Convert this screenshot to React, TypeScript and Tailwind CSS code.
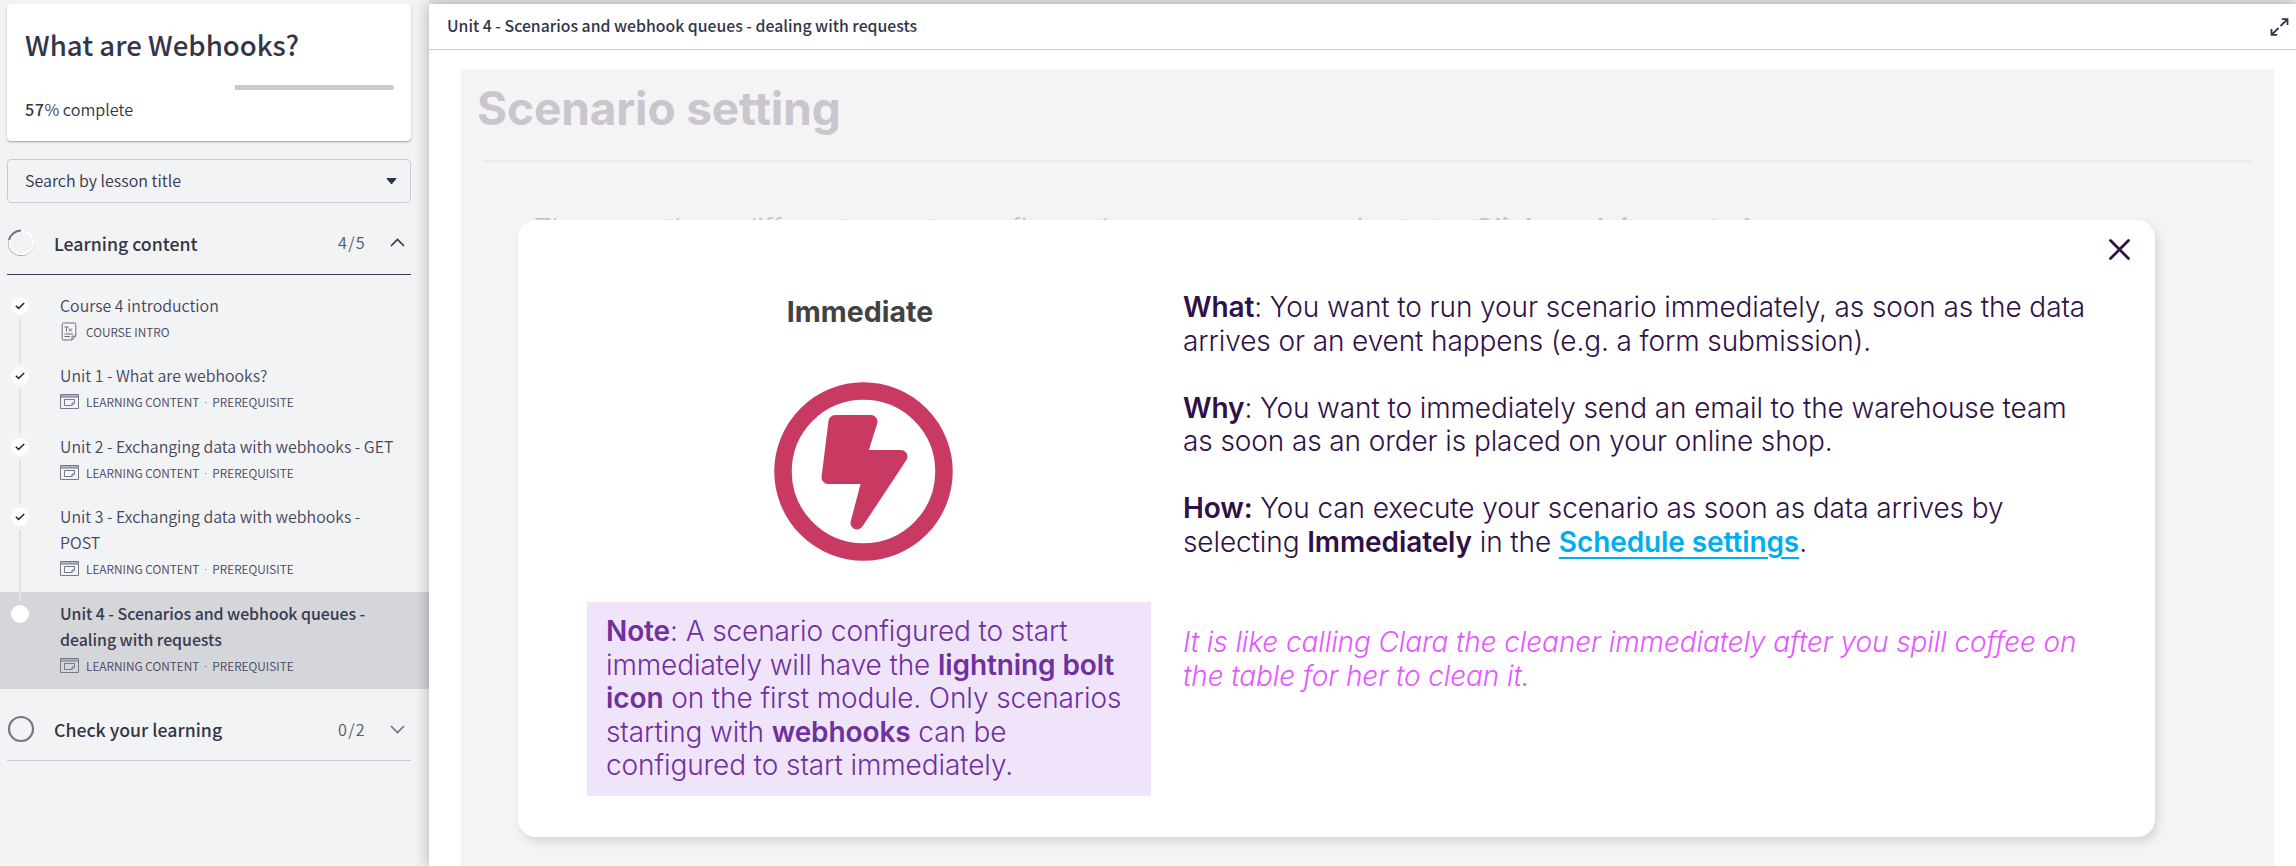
import React from "react";

const sans = "font-['Noto_Sans_CJK_SC',sans-serif]";

function Check({ done }: { done: boolean }) {
  return (
    <span className="flex size-[18px] shrink-0 items-center justify-center rounded-full bg-white">
      {done && (
        <svg width="10" height="8" viewBox="0 0 10 8" fill="none" stroke="#26262e" strokeWidth="1.5">
          <path d="M0.8 3.7 L3.6 6.4 L9.2 1" />
        </svg>
      )}
    </span>
  );
}

function PageIcon() {
  return (
    <svg className="ml-[1px]" width="16" height="19" viewBox="0 0 16 19" fill="none" stroke="#6b6c80" strokeWidth="1">
      <path d="M2.5 1 H13.5 Q14.8 1 14.8 2.4 V14 L11 18 H2.5 Q1.2 18 1.2 16.6 V2.4 Q1.2 1 2.5 1 Z M11 18 V14.2 H14.8" />
      <path d="M3.5 5 H7.5 M5.5 5 V9.5 M8 6.5 L10.8 9.5 M10.8 6.5 L8 9.5 M3.5 12 H12 M3.5 14.5 H9" />
    </svg>
  );
}

function SlideIcon() {
  return (
    <svg width="19" height="15" viewBox="0 0 19 15" fill="none" stroke="#77788b" strokeWidth="1">
      <path d="M1 2 H18" stroke="#b4b5c2" strokeWidth="2" />
      <path d="M0.5 0.5 H18.5 V14.5 H0.5 Z M0.5 3 H18.5" />
      <path d="M4.5 5.5 H14.5 V9 L12 11.5 H4.5 Z M12 11.5 V9 H14.5" />
    </svg>
  );
}

type Lesson = { lines: string[]; meta: string[]; icon: "page" | "slide"; active?: boolean; h: string };

const prerequisite = ["LEARNING CONTENT", "PREREQUISITE"];

const lessons: Lesson[] = [
  { lines: ["Course 4 introduction"], meta: ["COURSE INTRO"], icon: "page", h: "h-[70px]" },
  { lines: ["Unit 1 - What are webhooks?"], meta: prerequisite, icon: "slide", h: "h-[71px]" },
  { lines: ["Unit 2 - Exchanging data with webhooks - GET"], meta: prerequisite, icon: "slide", h: "h-[70px]" },
  { lines: ["Unit 3 - Exchanging data with webhooks -", "POST"], meta: prerequisite, icon: "slide", h: "h-[97px]" },
  { lines: ["Unit 4 - Scenarios and webhook queues -", "dealing with requests"], meta: prerequisite, icon: "slide", active: true, h: "h-[97px]" },
];

function LessonRow({ l }: { l: Lesson }) {
  return (
    <li className={`flex ${l.h} ${l.active ? "bg-[#d5d6da]" : ""}`}>
      <div className="flex w-[60px] shrink-0 flex-col pt-[13px] pl-[11px]">
        <Check done={!l.active} />
        {!l.active && <span className="mt-[4px] -mb-[9px] ml-[8px] w-[2px] grow bg-[#dfe0e3]" />}
      </div>
      <div className="pt-[9px]">
        {l.lines.map((t) => (
          <p
            key={t}
            className={`h-[26px] text-[15.9px] leading-[26px] whitespace-nowrap ${l.active ? "font-medium tracking-[-0.04px] text-[#383a52]" : "font-[350] text-[#45465c]"}`}
          >
            {t}
          </p>
        ))}
        <div className="flex h-[25px] items-center">
          <span className="w-[26px]">{l.icon === "page" ? <PageIcon /> : <SlideIcon />}</span>
          <span className="flex text-[11.9px] leading-[20px] font-[350] whitespace-nowrap text-[#45465c]">
            {l.meta[0]}
            {l.meta[1] && <span className="w-[13px] text-center font-['Noto_Sans',sans-serif]">·</span>}
            {l.meta[1]}
          </span>
        </div>
      </div>
    </li>
  );
}

function Sidebar() {
  return (
    <aside className={`flex w-[429px] shrink-0 flex-col bg-[#f2f3f5] pt-[4px] text-[#333549] ${sans}`}>
      <section className="ml-[7px] h-[137px] w-[404px] rounded-[4px] bg-white px-[18px] pt-[18px] shadow-[0_1px_2px_rgba(0,0,0,0.35)]">
        <h1 className="h-[44px] text-[27.6px] leading-[44px] font-medium whitespace-nowrap">What are Webhooks?</h1>
        <div className="mt-[19px] flex h-[5px] w-[369px] justify-end">
          <div className="w-[159px] rounded-r-[3px] bg-[#c8cad6]" />
        </div>
        <p className="mt-[6px] text-[16.2px] leading-[26px] font-[350]">
          <span className="font-medium tracking-[0.5px]">57</span>% complete
        </p>
      </section>
      <div className="mt-[18px] ml-[7px] flex h-[44px] w-[404px] items-center justify-between rounded-[4px] border border-[#c9cbd6] pr-[13px] pl-[17px]">
        <span className="pb-[3px] text-[16px] leading-[26px] font-[350]">Search by lesson title</span>
        <svg width="11" height="7" viewBox="0 0 11 7">
          <path d="M1 0.5 H10 L5.5 6 Z" fill="#2d3047" stroke="#2d3047" strokeLinejoin="round" />
        </svg>
      </div>
      <div className="ml-[7px] flex h-[72px] w-[404px] items-center border-b border-[#383a52] pt-[8px]">
        <svg width="28" height="28" viewBox="0 0 28 28" fill="none">
          <circle cx="14" cy="14" r="12.6" stroke="#8f90a0" strokeWidth="1" />
          <circle cx="14.3" cy="13.5" r="11.8" stroke="#ffffff" strokeWidth="2" />
          <path d="M2 11 A12.5 12.5 0 0 1 14 1.5" stroke="#6d6f84" strokeWidth="2" />
        </svg>
        <span className="ml-[19px] grow text-[17.7px] leading-[28px] font-medium">Learning content</span>
        <span className="text-[16.2px] font-[350] tracking-[1.3px] text-[#53556a]">4/5</span>
        <svg className="mr-[6px] ml-[24px]" width="15" height="9" viewBox="0 0 15 9" fill="none" stroke="#333549" strokeWidth="1.6">
          <path d="M1 8 L7.5 1.5 L14 8" />
        </svg>
      </div>
      <ul className="pt-[9px]">
        {lessons.map((l) => (
          <LessonRow key={l.lines[0]} l={l} />
        ))}
      </ul>
      <div className="ml-[7px] flex h-[72px] w-[404px] items-center border-b border-[#c8cad6] pt-[9px]">
        <svg width="28" height="28" viewBox="0 0 28 28" fill="none">
          <circle cx="14" cy="14" r="12" stroke="#74768a" strokeWidth="2.2" />
        </svg>
        <span className="ml-[19px] grow text-[17.7px] leading-[28px] font-medium">Check your learning</span>
        <span className="text-[16.2px] font-[350] tracking-[1.3px] text-[#53556a]">0/2</span>
        <svg className="mr-[6px] ml-[24px]" width="15" height="9" viewBox="0 0 15 9" fill="none" stroke="#6d6f84" strokeWidth="1.6">
          <path d="M1 1 L7.5 7.5 L14 1" />
        </svg>
      </div>
    </aside>
  );
}

function B({ children }: { children: React.ReactNode }) {
  return <b className="font-semibold">{children}</b>;
}

function Dialog() {
  return (
    <div className="absolute top-[151px] left-[57px] flex h-[617px] w-[1637px] rounded-[18px] bg-white pt-[69px] pl-[69px] font-['Inter',sans-serif] text-[28px] leading-[33.5px] font-light tracking-[-0.1px] whitespace-nowrap shadow-[3px_5px_10px_rgba(0,0,0,0.12)]">
      <div className="w-[564px] shrink-0">
        <h3 className="h-[44px] pt-[1px] pr-[18px] text-center text-[28.5px] leading-[44px] font-bold tracking-normal text-[#424242]">Immediate</h3>
        <svg className="mt-[48px] ml-[186px]" width="181" height="181" viewBox="0 0 181 181">
          <circle cx="90.5" cy="90.5" r="80.5" fill="none" stroke="#c93a63" strokeWidth="17.5" />
          <path
            d="M62 40.5 H98 L87 75.5 H128 L84 142 L96 96.5 H55 Z"
            fill="#c93a63"
            stroke="#c93a63"
            strokeWidth="13"
            strokeLinejoin="round"
          />
        </svg>
        <div className="mt-[40px] h-[194px] bg-[#f0e4fa] pt-[13px] pl-[19px] text-[#7030a0]">
          <p><B>Note</B>: A scenario configured to start</p>
          <p>immediately will have the <B>lightning bolt</B></p>
          <p><B>icon</B> on the first module. Only scenarios</p>
          <p>starting with <B>webhooks</B> can be</p>
          <p>configured to start immediately.</p>
        </div>
      </div>
      <div className="ml-[32px] grow pt-[2px] text-[#2f1147]">
        <p><B>What</B>: You want to run your scenario immediately, as soon as the data</p>
        <p>arrives or an event happens (e.g. a form submission).</p>
        <p className="mt-[33.5px]"><B>Why</B>: You want to immediately send an email to the warehouse team</p>
        <p>as soon as an order is placed on your online shop.</p>
        <p className="mt-[33.5px]"><B>How:</B> You can execute your scenario as soon as data arrives by</p>
        <p>
          selecting <B>Immediately</B> in the{" "}
          <a className="font-semibold text-[#00aeef] underline decoration-2 underline-offset-[5px]">Schedule settings</a>.
        </p>
        <p className="mt-[67px] text-[#e557ff] italic">It is like calling Clara the cleaner immediately after you spill coffee on</p>
        <p className="text-[#e557ff] italic">the table for her to clean it.</p>
      </div>
      <svg className="absolute top-[19px] right-[25px]" width="21" height="21" viewBox="0 0 21 21" fill="none" stroke="#2f1147" strokeWidth="2.8" strokeLinecap="round">
        <path d="M1.5 1.5 L19.5 19.5 M19.5 1.5 L1.5 19.5" />
      </svg>
    </div>
  );
}

export default function App() {
  return (
    <div className="flex h-[866px] w-[2296px] overflow-hidden bg-[#f2f3f5]">
      <Sidebar />
      <div className="flex grow flex-col bg-[#e8e9eb] pt-[4px]">
        <main className="flex grow flex-col bg-white shadow-[0_0_14px_rgba(0,0,0,0.3)]">
          <header className={`flex h-[46px] items-center justify-between border-b border-[#c8cad1] pr-[7px] pl-[18px] ${sans}`}>
            <span className="pb-[2px] text-[15.8px] font-medium text-[#333549]">Unit 4 - Scenarios and webhook queues - dealing with requests</span>
            <svg width="19" height="18" viewBox="0 0 19 18" fill="none" stroke="#333549" strokeWidth="1.8">
              <path d="M10.5 8 L17.5 1.2 M11.8 1.2 H17.5 V7 M8.5 10 L1.5 16.8 M1.5 11 V16.8 H7.2" />
            </svg>
          </header>
          <div className="relative mt-[19px] mr-[22px] ml-[32px] grow bg-[#f4f4f4]">
            <h2 className="h-[70px] pt-[11px] pl-[16px] font-['Inter',sans-serif] text-[46px] leading-[56px] font-bold tracking-[-0.15px] text-[#cbc5cf]">
              Scenario setting
            </h2>
            <div className="mt-[21px] mr-[23px] ml-[22px] h-[2px] bg-[#ebebeb]" />
            <p className="mt-[50px] pl-[73px] font-['Inter',sans-serif] text-[28px] leading-[34px] font-light tracking-[-0.1px] whitespace-nowrap text-[#cbc5cf]">
              There are three different ways to configure the way your scenario starts. <B>Click each image to learn more.</B>
            </p>
            <Dialog />
          </div>
        </main>
      </div>
    </div>
  );
}
